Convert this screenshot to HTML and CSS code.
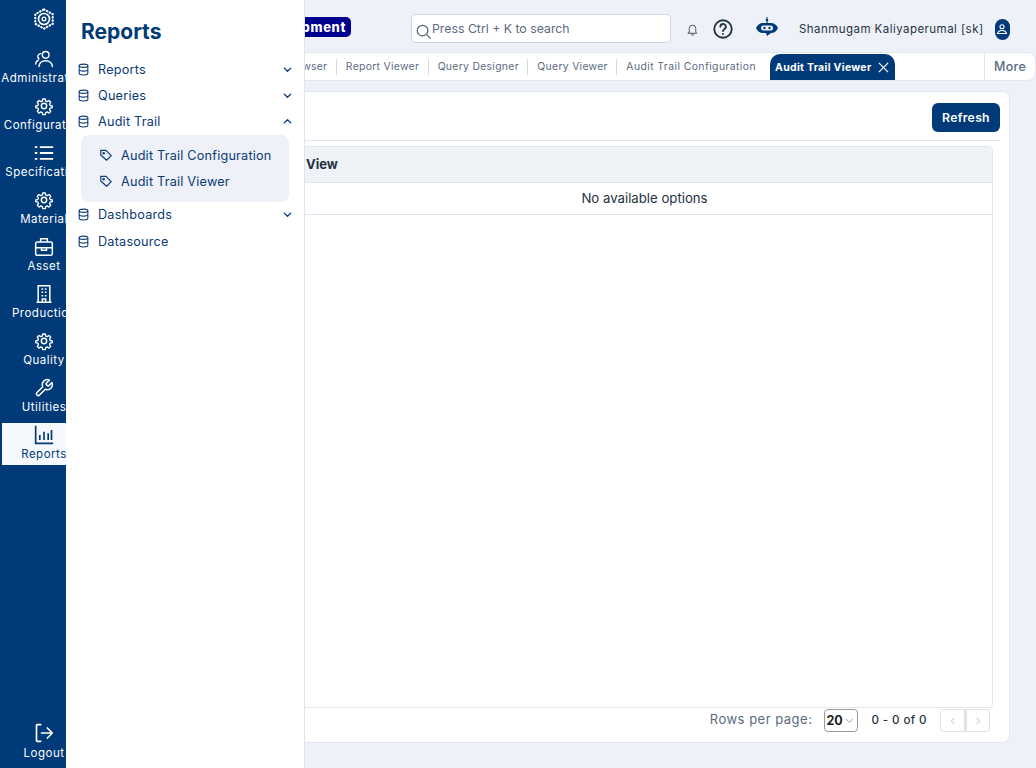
FILE: index.html
```html
<!DOCTYPE html>
<html lang="en">
<head>
  <meta charset="UTF-8">
  <title>Audit Trail Viewer</title>
  <link rel="stylesheet" href="styles.css">
</head>
<body>

  <svg class="sprites" width="0" height="0">
    <symbol id="i-gear" viewBox="0 0 24 24" fill="none" stroke="currentColor" stroke-width="1.8" stroke-linejoin="round">
      <path d="M10.300 2.600h3.400l.6 2.800 1.900.8 2.400-1.600 2.400 2.400-1.600 2.400.8 1.900 2.800.6v2.300l-2.800.6-.8 1.900 1.600 2.400-2.400 2.400-2.400-1.600-1.900.8-.6 2.800h-3.400l-.6-2.800-1.900-.8-2.400 1.600-2.400-2.400 1.600-2.400-.8-1.900-2.800-.6v-2.300l2.800-.6.8-1.900-1.600-2.400 2.400-2.400 2.400 1.600 1.900-.8z" transform="translate(1.2 1.2) scale(.9)"/>
      <circle cx="12" cy="12" r="3.2"/>
    </symbol>
    <symbol id="i-db" viewBox="0 0 24 24" fill="none" stroke="currentColor" stroke-width="2">
      <ellipse cx="12" cy="5" rx="8" ry="3"/>
      <path d="M4 5v14c0 1.700 3.600 3 8 3s8-1.300 8-3V5M4 12c0 1.700 3.600 3 8 3s8-1.300 8-3"/>
    </symbol>
    <symbol id="i-tag" viewBox="0 0 24 24" fill="none" stroke="currentColor" stroke-width="2" stroke-linejoin="round">
      <path d="M3 4h9l9 9-8 8-10-9z"/>
      <circle cx="8" cy="9" r="1.200"/>
    </symbol>
    <symbol id="i-down" viewBox="0 0 24 24" fill="none" stroke="currentColor" stroke-width="3" stroke-linecap="round" stroke-linejoin="round">
      <path d="M5 9l7 7 7-7"/>
    </symbol>
  </svg>

  <nav class="rail">
    <div class="rail-logo">
      <svg width="22" height="22" viewBox="0 0 24 24" fill="none" stroke="#fff" stroke-width="2.400" stroke-linecap="round" stroke-dasharray="0.5 3">
        <path d="M12 1.500l9.500 5.300v10.400L12 22.500l-9.500-5.300V6.800z"/>
        <circle cx="12" cy="12" r="6" stroke-width="1.800" stroke-dasharray="none"/>
        <circle cx="12" cy="12" r="2" stroke-width="1.500" stroke-dasharray="none"/>
      </svg>
    </div>
    <a class="rail-item">
      <svg width="20" height="20" viewBox="0 0 24 24" fill="none" stroke="currentColor" stroke-width="1.700" stroke-linecap="round">
        <circle cx="14" cy="7" r="4"/>
        <path d="M6 21c0-4 3.500-7 8-7s8 3 8 7M8 5.500a3.500 3.500 0 0 0-2 6.300M2 18c0-2 1-3.500 3-4.500"/>
      </svg>
      <span>Administration</span>
    </a>
    <a class="rail-item"><svg width="20" height="20"><use href="#i-gear"/></svg><span>Configuration</span></a>
    <a class="rail-item">
      <svg width="20" height="20" viewBox="0 0 24 24" fill="none" stroke="currentColor" stroke-width="2.200">
        <path d="M7 5h16M7 12h16M7 19h16M1 5h3M1 12h3M1 19h3"/>
      </svg>
      <span>Specification</span>
    </a>
    <a class="rail-item"><svg width="20" height="20"><use href="#i-gear"/></svg><span>Material</span></a>
    <a class="rail-item">
      <svg width="20" height="20" viewBox="0 0 24 24" fill="none" stroke="currentColor" stroke-width="1.800">
        <rect x="2" y="6" width="20" height="16" rx="2"/>
        <path d="M8 6V2h8v4M2 13h20M9 13v3h6v-3"/>
      </svg>
      <span>Asset</span>
    </a>
    <a class="rail-item">
      <svg width="20" height="20" viewBox="0 0 24 24" fill="none" stroke="currentColor" stroke-width="1.800">
        <path d="M5 22V2h14v20M3 22h18M9 6h2M13 6h2M9 10h2M13 10h2M9 14h2M13 14h2M10 22v-4h4v4"/>
      </svg>
      <span>Production</span>
    </a>
    <a class="rail-item"><svg width="20" height="20"><use href="#i-gear"/></svg><span>Quality</span></a>
    <a class="rail-item">
      <svg width="20" height="20" viewBox="0 0 24 24" fill="none" stroke="currentColor" stroke-width="1.800" stroke-linecap="round" stroke-linejoin="round">
        <path d="M14.700 6.300a1 1 0 0 0 0 1.400l1.600 1.600a1 1 0 0 0 1.400 0l3.770-3.770a6 6 0 0 1-7.940 7.940l-6.910 6.910a2.120 2.120 0 0 1-3-3l6.910-6.910a6 6 0 0 1 7.940-7.940l-3.760 3.760z"/>
      </svg>
      <span>Utilities</span>
    </a>
    <a class="rail-item active">
      <svg width="20" height="20" viewBox="0 0 24 24" fill="none" stroke="currentColor" stroke-width="2">
        <path d="M2 1v21h21M7 18v-6M12 18V8M17 18v-8M21 18V6"/>
      </svg>
      <span>Reports</span>
    </a>
    <a class="rail-item logout">
      <svg width="20" height="20" viewBox="0 0 24 24" fill="none" stroke="currentColor" stroke-width="2" stroke-linecap="round" stroke-linejoin="round">
        <path d="M8 2H4a1 1 0 0 0-1 1v18a1 1 0 0 0 1 1h4M9 12h13M16 6l6 6-6 6"/>
      </svg>
      <span>Logout</span>
    </a>
  </nav>

  <aside class="flyout">
    <h1>Reports</h1>
    <ul class="fly-menu">
      <li class="fly-row"><svg class="db" width="13" height="13"><use href="#i-db"/></svg>Reports<svg class="chev" width="11" height="11"><use href="#i-down"/></svg></li>
      <li class="fly-row"><svg class="db" width="13" height="13"><use href="#i-db"/></svg>Queries<svg class="chev" width="11" height="11"><use href="#i-down"/></svg></li>
      <li class="fly-row"><svg class="db" width="13" height="13"><use href="#i-db"/></svg>Audit Trail<svg class="chev up" width="11" height="11"><use href="#i-down"/></svg></li>
      <li class="fly-sub">
        <div class="sub-row"><svg width="14" height="14"><use href="#i-tag"/></svg>Audit Trail Configuration</div>
        <div class="sub-row"><svg width="14" height="14"><use href="#i-tag"/></svg>Audit Trail Viewer</div>
      </li>
      <li class="fly-row"><svg class="db" width="13" height="13"><use href="#i-db"/></svg>Dashboards<svg class="chev" width="11" height="11"><use href="#i-down"/></svg></li>
      <li class="fly-row last"><svg class="db" width="13" height="13"><use href="#i-db"/></svg>Datasource</li>
    </ul>
  </aside>

  <div class="main">
    <header class="topbar">
      <span class="env-badge">Development</span>
      <div class="search">
        <svg width="15" height="15" viewBox="0 0 24 24" fill="none" stroke="#54657e" stroke-width="2" stroke-linecap="round"><circle cx="10.500" cy="10.500" r="8.500"/><path d="M17 17l6 6"/></svg>
        <span>Press Ctrl + K to search</span>
      </div>
      <svg class="bell" width="13" height="13" viewBox="0 0 24 24" fill="none" stroke="#3d4f60" stroke-width="1.700" stroke-linecap="round">
        <path d="M6 17V10a6 6 0 0 1 12 0v7l2 2H4zM10 22h4"/>
      </svg>
      <svg class="help" width="20" height="20" viewBox="0 0 24 24" fill="none" stroke="#1f3243" stroke-width="2.200" stroke-linecap="round">
        <circle cx="12" cy="12" r="10.500"/>
        <path d="M8.800 9.200a3.300 3.300 0 1 1 4.800 3c-1 .6-1.600 1.100-1.600 2.300M12 17.800v.2"/>
      </svg>
      <svg class="bot" width="22" height="22" viewBox="0 0 22 22">
        <path d="M10.500 0h1v6h-1z" fill="#003a78"/>
        <circle cx="11" cy="3" r="1.300" fill="#003a78"/>
        <path d="M7 6h8c3 0 6 2 7 5-1 3-4 5-7 5l-4 3-1-3H7c-3 0-6-2-7-5 1-3 4-5 7-5z" fill="#003a78"/>
        <rect x="5" y="8.500" width="12" height="5" rx="2.500" fill="#eef1f7"/>
        <circle cx="8.500" cy="11" r="1.200" fill="#003a78"/>
        <circle cx="13.500" cy="11" r="1.200" fill="#003a78"/>
      </svg>
      <span class="user-name">Shanmugam Kaliyaperumal [sk]</span>
      <span class="avatar">
        <svg width="12" height="12" viewBox="0 0 24 24" fill="none" stroke="#fff" stroke-width="2.200" stroke-linecap="round"><circle cx="12" cy="7.500" r="4"/><path d="M3 21c1-4 4.500-6 9-6s8 2 9 6z"/></svg>
      </span>
    </header>

    <div class="tabs">
      <div class="tab-list">
        <span class="tab">Report Browser</span>
        <span class="tab">Report Viewer</span>
        <span class="tab">Query Designer</span>
        <span class="tab">Query Viewer</span>
        <span class="tab last">Audit Trail Configuration</span>
        <span class="tab-active">Audit Trail Viewer
          <svg width="11" height="11" viewBox="0 0 12 12" stroke="#fff" stroke-width="1.300"><path d="M1 1l10 10M11 1L1 11"/></svg>
        </span>
      </div>
      <span class="tab-more">More</span>
    </div>

    <section class="card">
      <div class="card-head">
        <button class="refresh">Refresh</button>
      </div>
      <div class="table-box">
        <div class="table-head">View</div>
        <div class="table-empty">No available options</div>
      </div>
      <div class="table-foot">
        <span class="rows-label">Rows per page:</span>
        <span class="rows-select">20
          <svg width="9" height="9" viewBox="0 0 12 12" fill="none" stroke="#8a94a3" stroke-width="1.200"><path d="M1.500 4l4.500 4.500L10.500 4"/></svg>
        </span>
        <span class="range">0 - 0 of 0</span>
        <span class="pager">
          <span><svg width="8" height="8" viewBox="0 0 12 12" fill="none" stroke="#b4bac3" stroke-width="1.400"><path d="M8 1.500L3.500 6 8 10.500"/></svg></span>
          <span><svg width="8" height="8" viewBox="0 0 12 12" fill="none" stroke="#b4bac3" stroke-width="1.400"><path d="M4 1.500L8.500 6 4 10.500"/></svg></span>
        </span>
      </div>
    </section>
  </div>

</body>
</html>
```

FILE: styles.css
```css
* {
  box-sizing: border-box;
}
body {
  margin: 0;
  height: 768px;
  overflow: hidden;
  display: flex;
  font-family: 'Inter', 'Liberation Sans', sans-serif;
  background-color: #eef1f7;
  color: #1f3243;
}
.sprites {
  display: none;
}

/* left rail */
.rail {
  width: 87px;
  flex-shrink: 0;
  display: flex;
  flex-direction: column;
  gap: 5px;
  background-color: #003a78;
  color: #fff;
  padding-left: 2px;
  overflow: hidden;
}
.rail-logo {
  height: 42px;
  display: flex;
  justify-content: center;
  padding: 8px 2px 0 0;
}
.rail-item {
  height: 42px;
  display: flex;
  flex-direction: column;
  align-items: center;
  gap: 2px;
  padding: 2px 1px 0 0;
  font-size: 11.5px;
  letter-spacing: 0.5px;
  line-height: 14px;
}
.rail-item span {
  white-space: nowrap;
}
.rail-item.active {
  background-color: #f5f8fc;
  color: #003a78;
}
.rail-item.logout {
  margin-top: auto;
  height: 47px;
  gap: 3px;
}

/* flyout menu */
.flyout {
  position: absolute;
  left: 66px;
  top: 0;
  width: 239px;
  height: 768px;
  background-color: #fff;
  border-right: 1px solid #dfe5ee;
  color: #0b3a75;
  padding: 18px 0 0 11px;
  z-index: 5;
}
.flyout h1 {
  margin: 0 0 10px 4px;
  font-size: 21px;
  line-height: 28px;
  font-weight: 700;
  color: #003a78;
}
.fly-menu {
  list-style: none;
  margin: 0;
  padding: 0;
  width: 216px;
}
.fly-row {
  height: 26px;
  display: flex;
  align-items: center;
  font-size: 12.7px;
  letter-spacing: 0.2px;
}
.fly-row .db {
  margin-right: 8px;
}
.fly-row .chev {
  margin-left: auto;
}
.fly-row .up {
  transform: rotate(180deg);
}
.fly-row.last {
  margin-top: 1px;
}
.fly-sub {
  margin: 1px 0 -1px 4px;
  width: 208px;
  height: 67px;
  padding: 7px 0 0 18px;
  background-color: #eef1f7;
  border-radius: 8px;
}
.sub-row {
  height: 26px;
  display: flex;
  align-items: center;
  gap: 8px;
  font-size: 12.7px;
  letter-spacing: 0.2px;
  white-space: nowrap;
}

/* main area */
.main {
  flex: 1;
  min-width: 0;
  display: flex;
  flex-direction: column;
}
.topbar {
  height: 52px;
  display: flex;
  align-items: center;
  padding-top: 6px;
}
.env-badge {
  margin-left: 154px;
  width: 110px;
  height: 20px;
  margin-top: -4px;
  padding: 0 5px;
  border-radius: 5px;
  background-color: #00008f;
  color: #fff;
  font-size: 13px;
  font-weight: 800;
  line-height: 20px;
  letter-spacing: 0.6px;
  text-align: right;
  white-space: nowrap;
}
.search {
  margin-left: 60px;
  width: 260px;
  height: 29px;
  margin-top: -1px;
  display: flex;
  align-items: flex-start;
  gap: 1px;
  padding: 6px 0 0 4px;
  background-color: #fff;
  border: 1px solid #ccd5e3;
  border-radius: 4px;
  font-size: 12.3px;
  color: #5c6b82;
}
.search svg {
  margin-top: 3px;
}
.bell {
  margin-left: 15px;
}
.help {
  margin-left: 14px;
}
.bot {
  margin-left: 23px;
  margin-top: -2px;
}
.user-name {
  margin-left: 21px;
  font-size: 11.5px;
  letter-spacing: 0.45px;
  white-space: nowrap;
}
.avatar {
  margin-left: 11px;
  width: 15px;
  height: 21px;
  border-radius: 8px;
  background-color: #003a78;
  display: flex;
  align-items: center;
  justify-content: center;
}

/* tab strip */
.tabs {
  height: 29px;
  display: flex;
  align-items: center;
  background-color: #fff;
  border: 1px solid #e2e7ef;
  border-radius: 0 8px 8px 0;
  font-size: 10.4px;
  color: #5c6b82;
  letter-spacing: 0.3px;
}
.tab-list {
  flex: 1;
  min-width: 0;
  height: 100%;
  display: flex;
  align-items: center;
  justify-content: flex-end;
  padding-right: 89px;
  overflow: hidden;
}
.tab {
  padding: 0 8.5px 0 9px;
  height: 16px;
  line-height: 16px;
  border-right: 1px solid #d5dbe5;
  white-space: nowrap;
}
.tab.last {
  border-right: none;
  padding-right: 14px;
  letter-spacing: 0.42px;
}
.tab-active {
  align-self: flex-end;
  flex-shrink: 0;
  width: 125px;
  height: 26px;
  display: flex;
  align-items: center;
  justify-content: space-between;
  padding: 0 6px 0 5px;
  background-color: #003a78;
  color: #fff;
  font-weight: 700;
  font-size: 10.5px;
  border-radius: 10px 10px 0 0;
  white-space: nowrap;
}
.tab-more {
  flex-shrink: 0;
  width: 51px;
  height: 27px;
  line-height: 27px;
  text-align: center;
  border-left: 1px solid #dfe5ee;
  font-size: 12.5px;
  font-weight: 500;
}

/* card and table */
.card {
  height: 652px;
  margin: 10px 26px 0 208px;
  display: flex;
  flex-direction: column;
  background-color: #fff;
  border: 1px solid #e2e7ef;
  border-radius: 8px;
  padding: 11px 9px 0 0;
}
.card-head {
  height: 38px;
  display: flex;
  justify-content: flex-end;
  align-items: flex-start;
  border-bottom: 1px solid #dfe5ee;
}
.refresh {
  height: 29px;
  width: 68px;
  background-color: #003a78;
  color: #fff;
  border: none;
  border-radius: 6px;
  font-family: inherit;
  font-size: 12.2px;
  font-weight: 600;
  letter-spacing: 0.3px;
}
.table-box {
  margin: 5px 7px 0 0;
  height: 562px;
  border: 1px solid #e2e7ef;
  border-radius: 4px;
}
.table-head {
  height: 36px;
  line-height: 34px;
  padding-left: 9px;
  background-color: #eff3f8;
  border-bottom: 1px solid #dfe5ee;
  font-size: 13px;
  font-weight: 700;
}
.table-empty {
  height: 32px;
  line-height: 30px;
  text-align: center;
  font-size: 13.2px;
  border-bottom: 1px solid #dfe5ee;
}
.table-foot {
  height: 33px;
  display: flex;
  align-items: flex-start;
  justify-content: flex-end;
  padding: 1px 10px 0 0;
  font-size: 13px;
}
.rows-label {
  color: #5c6b82;
  letter-spacing: 0.5px;
  line-height: 20px;
  margin-right: 12px;
}
.rows-select {
  width: 34px;
  height: 23px;
  display: flex;
  align-items: center;
  justify-content: space-between;
  padding: 0 3px 0 1px;
  border: 1px solid #9a9a9a;
  border-radius: 4px;
  font-weight: 700;
  font-size: 12.5px;
  color: #222;
  margin-right: 13px;
}
.range {
  font-size: 11.6px;
  font-weight: 500;
  line-height: 22px;
  letter-spacing: 0.4px;
  margin-right: 13px;
}
.pager {
  display: flex;
}
.pager span {
  width: 25px;
  height: 23px;
  display: flex;
  align-items: center;
  justify-content: center;
  border: 1px solid #e0e2e6;
}
.pager span:first-child {
  border-radius: 4px 0 0 4px;
}
.pager span:last-child {
  border-radius: 0 4px 4px 0;
  border-left: 2px solid #e0e2e6;
}
```
